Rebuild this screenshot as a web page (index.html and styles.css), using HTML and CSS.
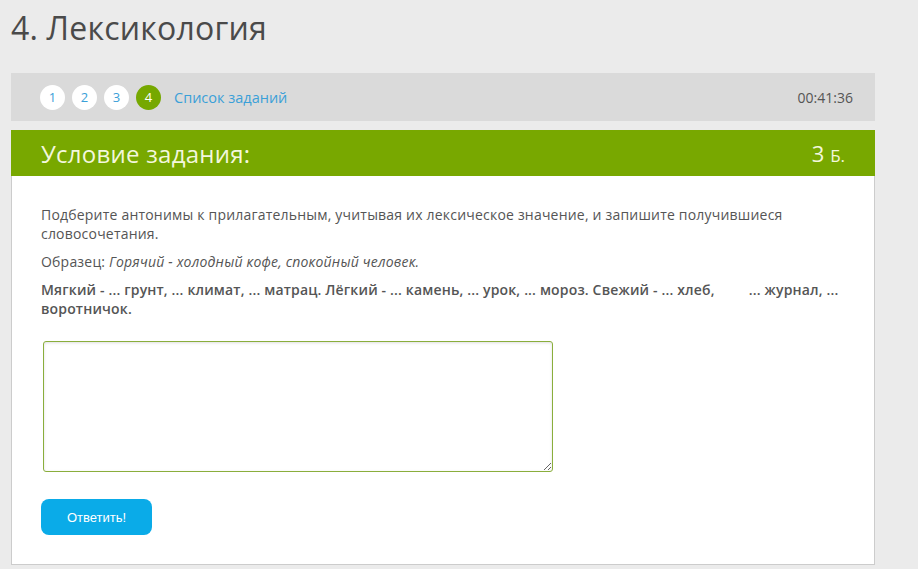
FILE: index.html
```html
<!DOCTYPE html>
<html lang="ru">
<head>
  <meta charset="UTF-8" />
  <title>4. Лексикология</title>
  <link rel="stylesheet" href="styles.css">
</head>
<body>
  <h1 class="page-title">4. Лексикология</h1>

  <div class="task-nav">
    <div class="steps">
      <a class="step">1</a>
      <a class="step">2</a>
      <a class="step">3</a>
      <a class="step active">4</a>
      <a class="task-list">Список заданий</a>
    </div>
    <div class="timer">00:41:36</div>
  </div>

  <div class="card">
    <div class="card-head">
      <h2>Условие задания:</h2>
      <span class="points">3 <small>Б.</small></span>
    </div>
    <div class="card-body">
      <p>Подберите антонимы к прилагательным, учитывая их лексическое значение, и запишите получившиеся словосочетания.</p>
      <p>Образец: <em>Горячий - холодный кофе, спокойный человек.</em></p>
      <p class="words">Мягкий - ... грунт, ... климат, ... матрац. Лёгкий - ... камень, ... урок, ... мороз. Свежий - ... хлеб,&nbsp;&nbsp;&nbsp;&nbsp;&nbsp;&nbsp;&nbsp;&nbsp; ... журнал, ... воротничок.</p>

      <textarea class="answer"></textarea>

      <button class="submit">Ответить!</button>
    </div>
  </div>
</body>
</html>
```

FILE: styles.css
```css
body {
  margin: 0;
  padding: 0 43px 0 11px;
  background-color: #ebebeb;
  font-family: 'Open Sans', sans-serif;
  color: #555;
}

.page-title {
  margin: 0;
  padding-top: 8px;
  height: 65px;
  font-size: 32px;
  font-weight: 400;
  letter-spacing: 0.2px;
  color: #4a4a4a;
  line-height: 40px;
}

.task-nav {
  display: flex;
  justify-content: space-between;
  align-items: center;
  height: 48px;
  padding: 0 22px 0 29px;
  background-color: #dadada;
}

.steps {
  display: flex;
  align-items: center;
  gap: 7px;
}

.step {
  width: 25px;
  height: 25px;
  border-radius: 50%;
  background-color: #fff;
  color: #3aa0d8;
  font-size: 13px;
  line-height: 25px;
  text-align: center;
}

.step.active {
  background-color: #76a800;
  color: #fff;
}

.task-list {
  margin-left: 6px;
  color: #3aa0d8;
  font-size: 14.5px;
}

.timer {
  font-size: 14px;
  color: #555;
}

.card {
  margin-top: 9px;
  background-color: #fff;
  border: 1px solid #ccc;
  border-top: none;
  height: 434px;
}

.card-head {
  display: flex;
  justify-content: space-between;
  align-items: center;
  height: 46px;
  margin: 0 -1px;
  padding: 0 30px;
  background-color: #78a800;
  color: #f3f7dc;
}

.card-head h2 {
  margin: 0;
  font-size: 24px;
  font-weight: 400;
  letter-spacing: 0.25px;
}

.points {
  font-size: 22px;
}

.points small {
  font-size: 17px;
}

.card-body {
  padding: 29px 29px 0 29px;
  font-size: 14px;
  line-height: 19px;
  letter-spacing: 0.2px;
}

.card-body p {
  margin: 0 0 9px;
}

.words {
  font-weight: 600;
  letter-spacing: 0.16px;
}

.answer {
  display: block;
  box-sizing: border-box;
  width: 510px;
  height: 131px;
  margin: 23px 0 27px 2px;
  border: 1px solid #8aae3c;
  border-radius: 3px;
  box-shadow: inset 0 1px 3px rgba(0,0,0,0.12);
}

.submit {
  width: 111px;
  height: 36px;
  border: none;
  border-radius: 8px;
  background-color: #0aabe8;
  color: #fff;
  font-family: 'Liberation Sans', sans-serif;
  font-size: 13px;
  letter-spacing: 0;
  cursor: pointer;
}
```
